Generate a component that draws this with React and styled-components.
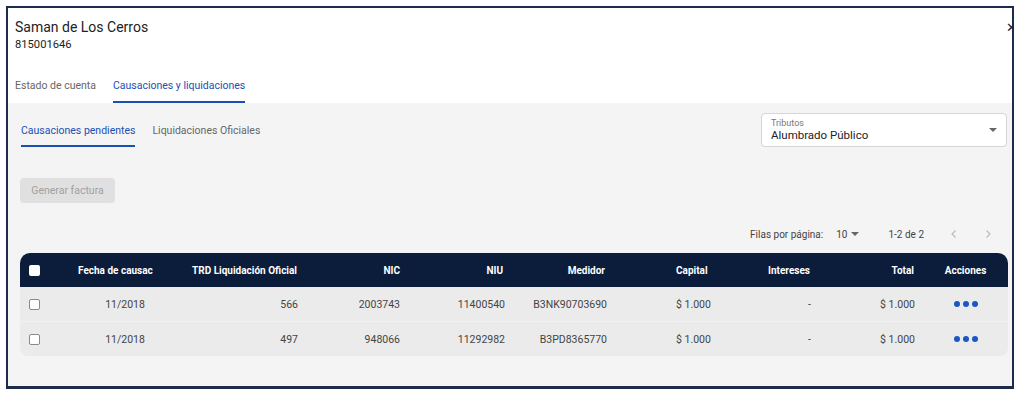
import React from 'react'
import styled, { createGlobalStyle } from 'styled-components'

const GlobalStyle = createGlobalStyle`
  body {
    margin: 0;
    background: #fff;
    font-family: Roboto, "Liberation Sans", sans-serif;
  }
`

const Frame = styled.div`
  position: relative;
  box-sizing: border-box;
  margin: 6px 0 0 6px;
  width: 1008px;
  height: 383px;
  border: 2px solid #1d2b4c;
  border-bottom-width: 3px;
  overflow: hidden;
  display: flex;
  flex-direction: column;
`

const Close = styled.div`
  position: absolute;
  right: -5px;
  top: 13px;
  font-size: 13px;
  color: #222;
  line-height: 13px;
`

const Header = styled.div`
  background: #fff;
  padding: 10px 0 0 7px;
`

const Title = styled.div`
  font-size: 14px;
  line-height: 18px;
  color: #222;
`

const Sub = styled.div`
  font-size: 11.2px;
  line-height: 15px;
  color: #222;
  margin-top: 1px;
`

const Tabs = styled.div`
  display: flex;
  gap: 17px;
  margin-top: 16px;
`

const Tab = styled.div`
  height: ${p => (p.$tall ? 35 : 34)}px;
  box-sizing: border-box;
  display: flex;
  align-items: center;
  font-size: 10.5px;
  color: ${p => (p.$active ? '#1a4fb4' : '#666')};
  border-bottom: 2px solid ${p => (p.$active ? '#1a4fb4' : 'transparent')};
  padding-top: 2px;
`

const Panel = styled.div`
  flex: 1;
  background: #f4f4f4;
  padding: 10px 5px 0 12px;
  display: flex;
  flex-direction: column;
`

const TopRow = styled.div`
  display: flex;
  justify-content: space-between;
  align-items: flex-start;
`

const SubTabs = styled.div`
  display: flex;
  gap: 17px;
  padding-left: 1px;
`

const Select = styled.div`
  position: relative;
  width: 246px;
  height: 34px;
  box-sizing: border-box;
  background: #fff;
  border: 1px solid #d6d6d6;
  border-radius: 4px;
  padding: 4px 0 0 9px;
`

const SelectLabel = styled.div`
  font-size: 9px;
  line-height: 10px;
  color: #777;
`

const SelectValue = styled.div`
  font-size: 11.5px;
  line-height: 15px;
  color: #222;
`

const Caret = styled.div`
  position: absolute;
  right: 9px;
  top: 14px;
  width: 0;
  height: 0;
  border-left: 4px solid transparent;
  border-right: 4px solid transparent;
  border-top: 4px solid #666;
`

const Button = styled.div`
  margin-top: 31px;
  width: 95px;
  height: 25px;
  border-radius: 4px;
  background: #e0e0e0;
  color: #a0a0a0;
  font-size: 10.5px;
  display: flex;
  align-items: center;
  justify-content: center;
`

const Pager = styled.div`
  display: flex;
  align-items: center;
  justify-content: flex-end;
  height: 24px;
  margin-top: 19px;
  padding-right: 13px;
  font-size: 10px;
  color: #444;
`

const PerPage = styled.span`
  margin-left: 13px;
  display: flex;
  align-items: center;
  gap: 4px;
`

const SmallCaret = styled.span`
  width: 0;
  height: 0;
  border-left: 4px solid transparent;
  border-right: 4px solid transparent;
  border-top: 4px solid #666;
`

const Range = styled.span`
  margin-left: 29px;
  margin-right: 24px;
`

const Arrow = styled.svg`
  width: 12px;
  height: 12px;
  margin-left: ${p => p.$gap || 0}px;
`

const Table = styled.div`
  margin-top: 7px;
  width: 988px;
  border-radius: 10px 10px 8px 8px;
  overflow: hidden;
  background: #ebebeb;
`

const cols = '42px 106px 137px 103px 105px 102px 125px 79px 104px 85px'

const HeadRow = styled.div`
  display: grid;
  grid-template-columns: ${cols};
  height: 34px;
  background: #0b1d3b;
  color: #fff;
  font-size: 10px;
  font-weight: 700;
`

const BodyRow = styled.div`
  display: grid;
  grid-template-columns: ${cols};
  height: 34px;
  font-size: 10.5px;
  color: #444;
  border-top: ${p => (p.$first ? 'none' : '1px solid #f2f2f2')};
`

const Cell = styled.div`
  display: flex;
  align-items: center;
  justify-content: ${p => p.$align || 'flex-start'};
  padding-left: ${p => p.$pl || 0}px;
  padding-right: ${p => p.$pr || 0}px;
  white-space: nowrap;
  overflow: hidden;
`

const Check = styled.div`
  width: 11px;
  height: 11px;
  box-sizing: border-box;
  border-radius: 2px;
  margin-left: 9px;
  background: #fff;
  border: ${p => (p.$head ? 'none' : '1px solid #8a8a8a')};
`

const Dots = styled.div`
  display: flex;
  gap: 3px;
  span {
    width: 6px;
    height: 6px;
    border-radius: 50%;
    background: #1b56c4;
  }
`

const rows = [
  ['11/2018', '566', '2003743', '11400540', 'B3NK90703690'],
  ['11/2018', '497', '948066', '11292982', 'B3PD8365770'],
]

const App = () => (
  <>
    <GlobalStyle />
    <Frame>
      <Close>✕</Close>
      <Header>
        <Title>Saman de Los Cerros</Title>
        <Sub>815001646</Sub>
        <Tabs>
          <Tab $tall>Estado de cuenta</Tab>
          <Tab $tall $active>Causaciones y liquidaciones</Tab>
        </Tabs>
      </Header>
      <Panel>
        <TopRow>
          <SubTabs>
            <Tab $active>Causaciones pendientes</Tab>
            <Tab>Liquidaciones Oficiales</Tab>
          </SubTabs>
          <Select>
            <SelectLabel>Tributos</SelectLabel>
            <SelectValue>Alumbrado Público</SelectValue>
            <Caret />
          </Select>
        </TopRow>
        <Button>Generar factura</Button>
        <Pager>
          <span>Filas por página:</span>
          <PerPage>10 <SmallCaret /></PerPage>
          <Range>1-2 de 2</Range>
          <Arrow viewBox="0 0 12 12">
            <path d="M7.5 2.5 L4 6 L7.5 9.5" fill="none" stroke="#bbb" strokeWidth="1.2" />
          </Arrow>
          <Arrow viewBox="0 0 12 12" $gap={22}>
            <path d="M4.5 2.5 L8 6 L4.5 9.5" fill="none" stroke="#bbb" strokeWidth="1.2" />
          </Arrow>
        </Pager>
        <Table>
          <HeadRow>
            <Cell><Check $head /></Cell>
            <Cell $pl={16}>Fecha de causac</Cell>
            <Cell $align="flex-end" $pr={8}>TRD Liquidación Oficial</Cell>
            <Cell $align="flex-end" $pr={8}>NIC</Cell>
            <Cell $align="flex-end" $pr={10}>NIU</Cell>
            <Cell $align="flex-end" $pr={10}>Medidor</Cell>
            <Cell $pl={61}>Capital</Cell>
            <Cell $align="flex-end" $pr={9}>Intereses</Cell>
            <Cell $align="flex-end" $pr={9}>Total</Cell>
            <Cell $align="center">Acciones</Cell>
          </HeadRow>
          {rows.map((r, i) => (
            <BodyRow key={i} $first={i === 0}>
              <Cell><Check /></Cell>
              <Cell $align="center" $pl={20}>{r[0]}</Cell>
              <Cell $align="flex-end" $pr={7}>{r[1]}</Cell>
              <Cell $align="flex-end" $pr={8}>{r[2]}</Cell>
              <Cell $align="flex-end" $pr={8}>{r[3]}</Cell>
              <Cell $align="flex-end" $pr={8}>{r[4]}</Cell>
              <Cell $pl={61}>$ 1.000</Cell>
              <Cell $align="flex-end" $pr={8}>-</Cell>
              <Cell $align="flex-end" $pr={8}>$ 1.000</Cell>
              <Cell $align="center">
                <Dots><span /><span /><span /></Dots>
              </Cell>
            </BodyRow>
          ))}
        </Table>
      </Panel>
    </Frame>
  </>
)

export default App
